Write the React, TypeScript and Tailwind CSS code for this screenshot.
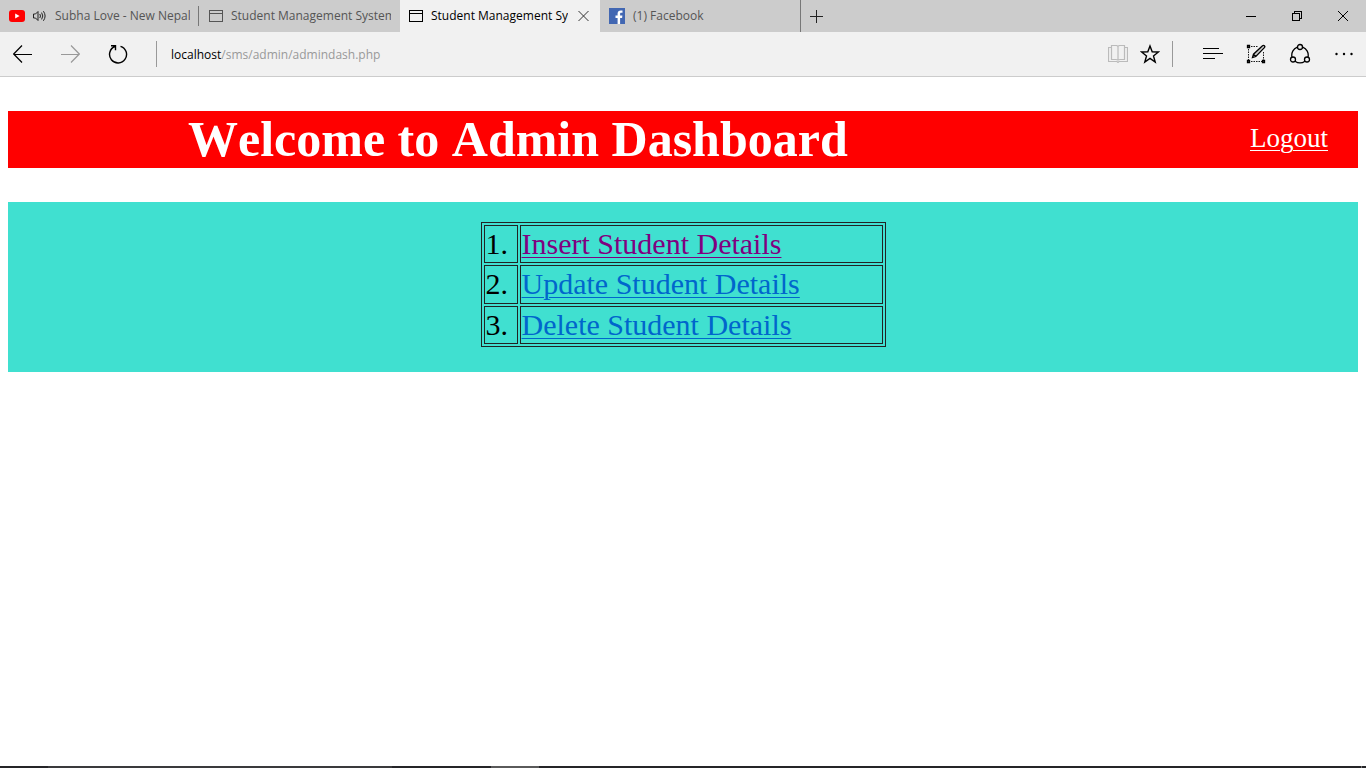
import type { ReactNode } from "react";

function PageIcon() {
  return (
    <svg width="14" height="12" viewBox="0 0 14 12" fill="none" stroke="currentColor" className="shrink-0" shapeRendering="crispEdges">
      <rect x="0.5" y="0.5" width="13" height="11" />
      <path d="M1 3.5h12" />
    </svg>
  );
}

function YouTubeIcon() {
  return (
    <svg width="16" height="12" viewBox="0 0 16 12" className="shrink-0">
      <rect width="16" height="12" rx="3" fill="#f00" />
      <path d="M6.2 3.5v5l4.4-2.5z" fill="#fff" />
    </svg>
  );
}

function SpeakerIcon() {
  return (
    <svg width="13" height="12" viewBox="0 0 13 12" fill="none" stroke="#222" strokeWidth="1" className="shrink-0">
      <path d="M.5 4v4h2L5 10.500v-9L2.500 4z" />
      <path d="M6.800 4q1.400 2 0 4M8.600 2.600q2.400 3.400 0 6.800M10.400 1.200q3.400 4.800 0 9.600" />
    </svg>
  );
}

function FacebookIcon() {
  return (
    <svg width="16" height="16" viewBox="0 0 16 16" className="shrink-0">
      <path d="M0 0h16v16H0z" fill="#4267b2" />
      <path d="M8.600 16V9.900H6.500V7.500h2.100V5.600c0-2.100 1.300-3.200 3.200-3.200.8 0 1.600.1 1.700.1v2.200h-1.200c-1 0-1.200.5-1.200 1.200v1.600h2.300l-.3 2.400h-2V16z" fill="#fff" />
    </svg>
  );
}

function IconButton({ label, className, children }: { label: string; className: string; children: ReactNode }) {
  return (
    <button type="button" aria-label={label} className={`flex shrink-0 items-center justify-center ${className}`}>
      {children}
    </button>
  );
}

function TabBar() {
  return (
    <div className="flex h-8 bg-[#ccc] text-xs text-[#555]">
      <div role="tablist" className="flex">
        <button type="button" role="tab" aria-selected="false" className="flex w-[200px] items-center pl-[9px]">
          <YouTubeIcon />
          <span className="ml-2 flex"><SpeakerIcon /></span>
          <span className="ml-[9px] mr-2 min-w-0 flex-1 overflow-hidden whitespace-nowrap text-left">Subha Love - New Nepali Song</span>
          <span className="mr-px h-5 w-px bg-[#777]" />
        </button>
        <button type="button" role="tab" aria-selected="false" className="flex w-[200px] items-center gap-2 px-[9px]">
          <PageIcon />
          <span className="min-w-0 flex-1 overflow-hidden whitespace-nowrap text-left">Student Management System</span>
        </button>
        <div className="flex w-[200px] items-center bg-[#f1f1f1] pl-[9px] text-black">
          <button type="button" role="tab" aria-selected="true" className="flex min-w-0 flex-1 items-center gap-2">
            <PageIcon />
            <span className="min-w-0 flex-1 overflow-hidden whitespace-nowrap text-left">Student Management System</span>
          </button>
          <IconButton label="Close tab" className="h-8 w-8">
            <svg width="12" height="12" viewBox="0 0 12 12" stroke="#333"><path d="M.5 1l10 10M10.500 1l-10 10" /></svg>
          </IconButton>
        </div>
        <button type="button" role="tab" aria-selected="false" className="flex w-[201px] items-center gap-2 border-r border-[#777] pl-[9px]">
          <FacebookIcon />
          <span>(1) Facebook</span>
        </button>
      </div>
      <IconButton label="New tab" className="h-8 w-[31px]">
        <svg width="13" height="13" viewBox="0 0 13 13" stroke="#222" shapeRendering="crispEdges"><path d="M0 6.500h13M6.500 0v13" /></svg>
      </IconButton>
      <div className="ml-auto flex">
        <IconButton label="Minimize" className="h-8 w-[46px]">
          <svg width="10" height="10" viewBox="0 0 10 10" stroke="#000" shapeRendering="crispEdges"><path d="M0 5.500h10" /></svg>
        </IconButton>
        <IconButton label="Restore" className="h-8 w-[46px]">
          <svg width="10" height="10" viewBox="0 0 10 10" fill="none" stroke="#000" shapeRendering="crispEdges"><path d="M.5 2.500h7v7h-7zM2.500 2.500v-2h7v7h-2" /></svg>
        </IconButton>
        <IconButton label="Close" className="h-8 w-[46px]">
          <svg width="10" height="10" viewBox="0 0 10 10" stroke="#000"><path d="M0 0l10 10M10 0L0 10" /></svg>
        </IconButton>
      </div>
    </div>
  );
}

function ToolBar() {
  return (
    <div className="flex h-[45px] items-center border-b border-[#ccc] bg-[#f1f1f1] text-black">
      <IconButton label="Back" className="h-11 w-[46px]">
        <svg width="20" height="18" viewBox="0 0 20 18" fill="none" stroke="currentColor" strokeWidth="1.200"><path d="M9 .5L.7 9 9 17.500M.7 9.500H19" /></svg>
      </IconButton>
      <IconButton label="Forward" className="h-11 w-12 text-[#999]">
        <svg width="20" height="18" viewBox="0 0 20 18" fill="none" stroke="currentColor" strokeWidth="1.200"><path d="M11 .5L19.300 9 11 17.500M19.300 9.500H1" /></svg>
      </IconButton>
      <IconButton label="Refresh" className="h-11 w-12">
        <svg width="20" height="20" viewBox="0 0 20 20" fill="none" stroke="currentColor" strokeWidth="1.400"><path d="M12.500 2.300A8.500 8.500 0 1 1 7 2.500M3 1.700h4.500v4.500" /></svg>
      </IconButton>
      <span className="ml-3.5 h-[26px] w-px bg-[#999]" />
      <a href="#address" aria-label="Address" className="ml-3.5 pt-px text-xs text-[#999]">
        <span className="text-black">localhost</span>/sms/admin/admindash.php
      </a>
      <div className="ml-auto flex items-center">
        <IconButton label="Reading view" className="h-11 w-8 text-[#bbb]">
          <svg width="20" height="18" viewBox="0 0 20 18" fill="none" stroke="currentColor" strokeWidth="1.200">
            <path d="M3.500.5h4.500q2 0 2 1.500 0-1.500 2-1.500h4.500v14H12q-2 0-2 1 0-1-2-1H3.500zM10 1.500v14M3.500 2.500h-3v14H9l1 1 1-1h8.500v-14h-3" />
          </svg>
        </IconButton>
        <IconButton label="Add to favorites" className="h-11 w-8">
          <svg width="20" height="20" viewBox="0 0 20 20" fill="none" stroke="currentColor" strokeWidth="1.400"><path d="M10 2l2.200 5.800 6.200.2-4.900 3.900L15.200 18 10 14.400 4.800 18l1.700-6.100L1.600 8l6.200-.2z" /></svg>
        </IconButton>
        <span className="ml-1.5 mr-[17px] h-[26px] w-px bg-[#999]" />
        <IconButton label="Hub" className="h-11 w-[46px]">
          <svg width="20" height="12" viewBox="0 0 20 12" stroke="currentColor" shapeRendering="crispEdges"><path d="M0 .5h16M0 5.500h20M0 10.500h12" /></svg>
        </IconButton>
        <IconButton label="Make a web note" className="h-11 w-10">
          <svg width="20" height="20" viewBox="0 0 20 20" fill="none" stroke="currentColor">
            <path d="M2.500 5v11M5 2.500h7M5 17.500h11M17.500 8v8" strokeDasharray="1.500 1" strokeWidth="0.900" />
            <path d="M1.500 1.500h2v2h-2zM1.500 16.500h2v2h-2zM16.500 16.500h2v2h-2z" fill="#777" strokeWidth="1.300" />
            <path d="M6.500 13.500l1-3.300 9-8.500q1-.8 1.900 0t0 1.900l-8.600 8.900zM7.500 10.200l2.200 2.200" strokeWidth="1.300" fill="#ccc" />
          </svg>
        </IconButton>
        <IconButton label="Share" className="h-11 w-12">
          <svg width="22" height="22" viewBox="0 0 22 22" fill="none" stroke="currentColor" strokeWidth="1.300">
            <circle cx="11" cy="4" r="2.500" /><circle cx="4" cy="16.500" r="2.500" /><circle cx="18" cy="16.500" r="2.500" />
            <path d="M8.300 4.100A8.700 8.700 0 0 0 3 14.200M13.700 4.100A8.700 8.700 0 0 1 19 14.200M6 18.200a8.700 8.700 0 0 0 10 0" />
          </svg>
        </IconButton>
        <IconButton label="More" className="mr-0.5 h-11 w-10">
          <svg width="18" height="4" viewBox="0 0 18 4" fill="currentColor"><circle cx="1.500" cy="2" r="1.200" /><circle cx="9" cy="2" r="1.200" /><circle cx="16.500" cy="2" r="1.200" /></svg>
        </IconButton>
      </div>
    </div>
  );
}

const actions = [
  { id: "1.", label: "Insert Student Details", color: "text-[#800080]" },
  { id: "2.", label: "Update Student Details", color: "text-[#0066cc]" },
  { id: "3.", label: "Delete Student Details", color: "text-[#0066cc]" },
];

function Dashboard() {
  return (
    <main className="flex-1 px-2 pt-[34px] font-['Liberation_Serif',serif]">
      <header className="flex items-start justify-between bg-[red] pl-[180px] pr-[30px] text-white">
        <h1 className="text-[50px] font-bold leading-[57px] [font-kerning:none]">Welcome to Admin Dashboard</h1>
        <a href="#logout" className="pt-3 text-[27px] leading-[30px] underline decoration-1 underline-offset-3">Logout</a>
      </header>
      <section className="mt-[34px] bg-[#40e0d0] pb-[25px] pt-5">
        <table className="mx-auto h-[125px] w-[405px] border-separate border-spacing-[2px] border border-[#222] text-[30px] leading-[34px] text-black">
          <tbody>
            {actions.map((a) => (
              <tr key={a.id}>
                <td className="w-[34px] border border-[#222] p-px">{a.id}</td>
                <td className="border border-[#222] p-px">
                  <a href="#details" className={`underline decoration-1 underline-offset-3 ${a.color}`}>{a.label}</a>
                </td>
              </tr>
            ))}
          </tbody>
        </table>
      </section>
    </main>
  );
}

export default function App() {
  return (
    <div className="flex min-h-screen flex-col bg-white">
      <div className="font-['Open_Sans',sans-serif]">
        <TabBar />
        <ToolBar />
      </div>
      <Dashboard />
      <footer className="flex h-0.5 bg-[#252528]">
        <span className="ml-12 w-[344px] bg-[#3a3a3c]" />
        <span className="ml-[99px] w-12 bg-[#5a5a5a]" />
        <span className="ml-auto mr-1 w-px bg-[#777]" />
      </footer>
    </div>
  );
}
